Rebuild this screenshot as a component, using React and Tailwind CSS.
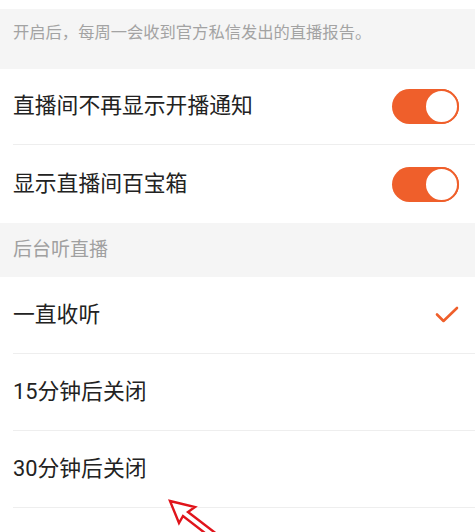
import React from "react";

function Toggle() {
  return (
    <div className="w-[67px] h-[35px] rounded-full bg-[#ef5f2b] flex items-center justify-end">
      <div className="w-[35px] h-[35px] rounded-full bg-white border-2 border-[#ef5f2b]"></div>
    </div>
  );
}

function Check() {
  return (
    <svg width="24" height="20" viewBox="0 0 24 20" fill="none">
      <path d="M2 9.5 L8.5 16 L22 3" stroke="#ef5f2b" strokeWidth="2.6" strokeLinecap="round" strokeLinejoin="round" />
    </svg>
  );
}

function Row({ label, right, h = "h-[77px]" }) {
  return (
    <div className={`${h} flex items-center justify-between pr-4 ml-[13px] border-b border-[#eeeeee]`}>
      <span className="text-[21.8px] text-[#222222]">{label}</span>
      {right}
    </div>
  );
}

export default function App() {
  return (
    <div
      className="relative w-[475px] h-[532px] overflow-hidden bg-white"
      style={{ fontFamily: 'Roboto, "Noto Sans CJK SC", "Noto Sans", sans-serif' }}
    >
      <div className="h-[9px] bg-white"></div>
      <div className="h-[60px] bg-[#f5f5f5] px-[13px] pt-[12px]">
        <p className="text-[16.3px] leading-[23px] text-[#a3a3a3]">开启后，每周一会收到官方私信发出的直播报告。</p>
      </div>

      <Row label="直播间不再显示开播通知" right={<Toggle />} h="h-[76px]" />
      <Row label="显示直播间百宝箱" right={<Toggle />} h="h-[78px] border-b-0" />

      <div className="h-[54px] bg-[#f5f5f5] px-[13px] flex items-center">
        <span className="text-[19px] text-[#a0a0a0]">后台听直播</span>
      </div>

      <Row label="一直收听" right={<Check />} />
      <Row label="15分钟后关闭" />
      <Row label="30分钟后关闭" />
      <Row label="60分钟后关闭" />

      <svg className="absolute left-[160px] top-[495px]" width="70" height="45" viewBox="0 0 70 45" fill="none">
        <polygon
          points="10,6 35,12 28,17 58,40 54,45 23,21 19,28"
          fill="white"
          stroke="#e0141b"
          strokeWidth="2.4"
          strokeLinejoin="miter"
        />
      </svg>
    </div>
  );
}
